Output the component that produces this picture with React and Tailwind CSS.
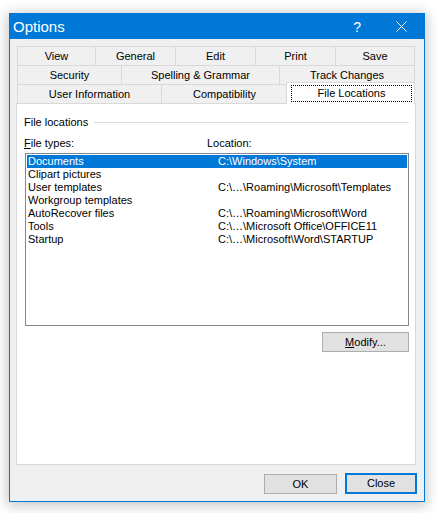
import { useState } from 'react';

const ROW1 = [
  { label: 'View', w: 'w-[79px]' },
  { label: 'General', w: 'w-[80px]' },
  { label: 'Edit', w: 'w-[80px]' },
  { label: 'Print', w: 'w-[80px]' },
  { label: 'Save', w: 'w-[79px]' },
];

const ROW2 = [
  { label: 'Security', w: 'w-[105px]' },
  { label: 'Spelling & Grammar', w: 'w-[158px]' },
  { label: 'Track Changes', w: 'w-[135px]' },
];

const FILES = [
  ['Documents', 'C:\\Windows\\System'],
  ['Clipart pictures', ''],
  ['User templates', 'C:\\…\\Roaming\\Microsoft\\Templates'],
  ['Workgroup templates', ''],
  ['AutoRecover files', 'C:\\…\\Roaming\\Microsoft\\Word'],
  ['Tools', 'C:\\…\\Microsoft Office\\OFFICE11'],
  ['Startup', 'C:\\…\\Microsoft\\Word\\STARTUP'],
];

function Tab({ label, w, first }) {
  return (
    <div
      className={`${w} h-[19px] shrink-0 flex items-center justify-center border-t border-r border-[#d9d9d9] ${
        first ? 'border-l' : ''
      }`}
    >
      {label}
    </div>
  );
}

export default function App() {
  const [selected, setSelected] = useState(0);

  return (
    <div className="w-[438px] h-[513px] bg-white pt-[13px] pl-[9px] font-['Liberation_Sans',Arial,sans-serif] text-[11px] leading-[13px] text-black">
      <div className="w-[416px] h-[489px] border border-[#0078d7] bg-[#f0f0f0] flex flex-col shadow-[0_2px_12px_2px_rgba(0,0,0,0.22)]">
        {/* title bar */}
        <div className="h-[25px] shrink-0 bg-[#0078d7] text-white flex items-center">
          <span className="ml-[3px] text-[15px] leading-[18px]">Options</span>
          <span className="ml-auto text-[14px] leading-[16px] mr-[35px]">?</span>
          <svg width="11" height="11" viewBox="0 0 11 11" className="mr-[17px]">
            <path d="M0.5 0.5 L10.5 10.5 M10.5 0.5 L0.5 10.5" stroke="white" strokeWidth="1" />
          </svg>
        </div>

        {/* tabs + page */}
        <div className="pl-[6px] pt-[7px]">
          <div className="pl-px">
            <div className="flex">
              {ROW1.map((t, i) => (
                <Tab key={t.label} {...t} first={i === 0} />
              ))}
            </div>
            <div className="flex">
              {ROW2.map((t, i) => (
                <Tab key={t.label} {...t} first={i === 0} />
              ))}
            </div>
            <div className="flex h-[19px]">
              <Tab label="User Information" w="w-[145px]" first />
              <Tab label="Compatibility" w="w-[126px]" />
              <div className="relative z-10 w-[129px] h-[22px] -mt-[2px] -ml-[2px] shrink-0 bg-white border-t border-l border-r border-[#d9d9d9] pl-[4px] pr-[2px] pt-[2px]">
                <div className="h-[17px] border border-dotted border-black flex items-center justify-center">
                  File Locations
                </div>
              </div>
            </div>
          </div>

          <div className="w-[400px] h-[362px] border border-[#d9d9d9] bg-white flex flex-col pl-[7px] pr-[6px] pt-[12px]">
            <div className="flex items-center h-[13px]">
              <span>File locations</span>
              <div className="flex-1 h-px bg-[#dcdcdc] ml-[6px]" />
            </div>

            <div className="flex mt-[8px] h-[13px]">
              <span className="w-[183px]">
                <span className="underline underline-offset-[1px]">F</span>ile types:
              </span>
              <span>Location:</span>
            </div>

            <div className="ml-px mt-[3px] w-[384px] h-[173px] border border-[#828790] bg-white p-px">
              {FILES.map(([name, loc], i) => (
                <div
                  key={name}
                  onClick={() => setSelected(i)}
                  className={`flex h-[13px] items-center pl-px ${
                    selected === i ? 'bg-[#0078d7] text-white' : ''
                  }`}
                >
                  <span className="w-[190px] shrink-0 whitespace-nowrap">{name}</span>
                  <span className="whitespace-nowrap">{loc}</span>
                </div>
              ))}
            </div>

            <div className="flex justify-end mt-[6px]">
              <button className="w-[87px] h-[20px] border border-[#adadad] bg-[#e1e1e1] flex items-center justify-center">
                <span className="underline underline-offset-[1px]">M</span>odify...
              </button>
            </div>
          </div>
        </div>

        {/* buttons */}
        <div className="flex justify-end gap-[8px] mt-[9px] pr-[7px]">
          <button className="w-[73px] h-[20px] border border-[#adadad] bg-[#e1e1e1] flex items-center justify-center">
            OK
          </button>
          <button className="w-[72px] h-[21px] -mt-px border-2 border-[#0078d7] bg-[#e1e1e1] flex items-center justify-center">
            Close
          </button>
        </div>
      </div>
    </div>
  );
}
